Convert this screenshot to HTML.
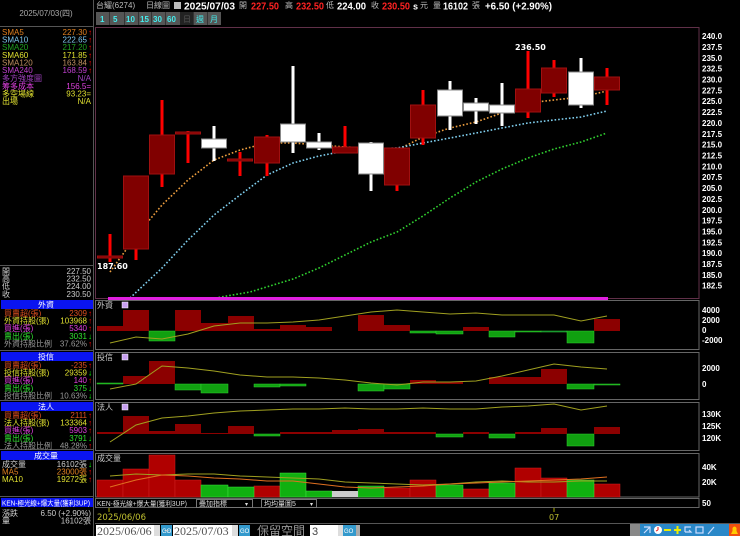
<!DOCTYPE html>
<html><head><meta charset="utf-8">
<style>
html,body{margin:0;padding:0;background:#000;width:740px;height:536px;overflow:hidden}
svg{display:block}
text{font-family:"Liberation Sans","Noto Sans CJK TC",sans-serif}
.s{font-size:8px}
.n{font-family:"DejaVu Sans","Liberation Sans",sans-serif;font-size:8px;font-weight:bold;fill:#fff}
.t{font-family:"Liberation Sans",sans-serif;font-weight:bold;font-size:10px;fill:#fff}
</style></head><body>
<svg width="740" height="536" viewBox="0 0 740 536" xmlns="http://www.w3.org/2000/svg">
<rect width="740" height="536" fill="#000"/>
<line x1="93.5" y1="0" x2="93.5" y2="536" stroke="#555" stroke-width="1"/>
<line x1="0" y1="26.5" x2="93" y2="26.5" stroke="#555"/>
<text x="46" y="16" class="s" fill="#aaa" text-anchor="middle">2025/07/03(四)</text>
<g class="s">
<text x="2" y="35" fill="#e08020">SMA5</text><text x="87" y="35" fill="#e08020" text-anchor="end">227.30</text>
<text x="2" y="42.5" fill="#80c8f0">SMA10</text><text x="87" y="42.5" fill="#80c8f0" text-anchor="end">222.65</text>
<text x="2" y="50" fill="#20a020">SMA20</text><text x="87" y="50" fill="#20a020" text-anchor="end">217.20</text>
<text x="2" y="58" fill="#e0e030">SMA60</text><text x="87" y="58" fill="#e0e030" text-anchor="end">171.85</text>
<text x="2" y="65.5" fill="#c09060">SMA120</text><text x="87" y="65.5" fill="#c09060" text-anchor="end">163.84</text>
<text x="2" y="73" fill="#c040d0">SMA240</text><text x="87" y="73" fill="#c040d0" text-anchor="end">168.59</text>
<text x="2" y="81" fill="#a040c0">多方強度圖</text><text x="91" y="81" fill="#a040c0" text-anchor="end">N/A</text>
<text x="2" y="89" fill="#e040e0">筹多成本</text><text x="91" y="89" fill="#e040e0" text-anchor="end">156.5=</text>
<text x="2" y="96.5" fill="#e0e030">多空場線</text><text x="91" y="96.5" fill="#e0e030" text-anchor="end">93.23=</text>
<text x="2" y="104" fill="#e0e030">出場</text><text x="91" y="104" fill="#e0e030" text-anchor="end">N/A</text>
</g>
<g fill="#f00" class="s">
<text x="88" y="35">↑</text><text x="88" y="42.5">↑</text><text x="88" y="50">↑</text><text x="88" y="58">↑</text><text x="88" y="65.5">↑</text><text x="88" y="73">↑</text>
</g>
<line x1="0" y1="265.5" x2="93" y2="265.5" stroke="#555"/>
<g class="s" fill="#ccc">
<text x="2" y="274">開</text><text x="91" y="274" text-anchor="end">227.50</text>
<text x="2" y="281.5">高</text><text x="91" y="281.5" text-anchor="end">232.50</text>
<text x="2" y="289">低</text><text x="91" y="289" text-anchor="end">224.00</text>
<text x="2" y="297">收</text><text x="91" y="297" text-anchor="end">230.50</text>
</g>
<g>
<rect x="1" y="300" width="92" height="9" fill="#0a14f0"/><text x="46" y="307.5" class="s" fill="#fff" text-anchor="middle">外資</text>
<rect x="1" y="352" width="92" height="9" fill="#0a14f0"/><text x="46" y="359.5" class="s" fill="#fff" text-anchor="middle">投信</text>
<rect x="1" y="402" width="92" height="9" fill="#0a14f0"/><text x="46" y="409.5" class="s" fill="#fff" text-anchor="middle">法人</text>
<rect x="1" y="451" width="92" height="9" fill="#0a14f0"/><text x="46" y="458.5" class="s" fill="#fff" text-anchor="middle">成交量</text>
<rect x="1" y="498" width="92" height="9" fill="#0a14f0"/><text x="2" y="505.5" class="s" fill="#fff" style="font-size:7px" textLength="88" lengthAdjust="spacingAndGlyphs">KEN-極光線+爆大量(獲利3UP)</text>
</g>
<line x1="0" y1="350.5" x2="93" y2="350.5" stroke="#555"/>
<line x1="0" y1="400.5" x2="93" y2="400.5" stroke="#555"/>
<line x1="0" y1="449.5" x2="93" y2="449.5" stroke="#555"/>
<line x1="0" y1="496.5" x2="93" y2="496.5" stroke="#555"/>
<g class="s">
<text x="4" y="316" fill="#e05020">買賣超(張)</text><text x="87" y="316" fill="#e05020" text-anchor="end">2309</text>
<text x="4" y="323.5" fill="#e0e030">外資持股(張)</text><text x="87" y="323.5" fill="#e0e030" text-anchor="end">103968</text>
<text x="4" y="331" fill="#e040e0">買進(張)</text><text x="87" y="331" fill="#e040e0" text-anchor="end">5340</text>
<text x="4" y="339" fill="#30e030">賣出(張)</text><text x="87" y="339" fill="#30e030" text-anchor="end">3031</text>
<text x="4" y="346.5" fill="#999">外資持股比例</text><text x="87" y="346.5" fill="#999" text-anchor="end">37.62%</text>
<text x="4" y="368" fill="#e05020">買賣超(張)</text><text x="87" y="368" fill="#e05020" text-anchor="end">-235</text>
<text x="4" y="375.5" fill="#e0e030">投信持股(張)</text><text x="87" y="375.5" fill="#e0e030" text-anchor="end">29359</text>
<text x="4" y="383" fill="#e040e0">買進(張)</text><text x="87" y="383" fill="#e040e0" text-anchor="end">140</text>
<text x="4" y="391" fill="#30e030">賣出(張)</text><text x="87" y="391" fill="#30e030" text-anchor="end">375</text>
<text x="4" y="398.5" fill="#999">投信持股比例</text><text x="87" y="398.5" fill="#999" text-anchor="end">10.63%</text>
<text x="4" y="418" fill="#e05020">買賣超(張)</text><text x="87" y="418" fill="#e05020" text-anchor="end">2111</text>
<text x="4" y="425.5" fill="#e0e030">法人持股(張)</text><text x="87" y="425.5" fill="#e0e030" text-anchor="end">133364</text>
<text x="4" y="433" fill="#e040e0">買進(張)</text><text x="87" y="433" fill="#e040e0" text-anchor="end">5903</text>
<text x="4" y="441" fill="#30e030">賣出(張)</text><text x="87" y="441" fill="#30e030" text-anchor="end">3791</text>
<text x="4" y="448.5" fill="#999">法人持股比例</text><text x="87" y="448.5" fill="#999" text-anchor="end">48.28%</text>
<text x="2" y="467" fill="#ccc">成交量</text><text x="87" y="467" fill="#ccc" text-anchor="end">16102張</text>
<text x="2" y="474.5" fill="#e08020">MA5</text><text x="87" y="474.5" fill="#e08020" text-anchor="end">23000張</text>
<text x="2" y="482" fill="#e0e030">MA10</text><text x="87" y="482" fill="#e0e030" text-anchor="end">19272張</text>
<text x="2" y="516" fill="#ccc">漲跌</text><text x="91" y="516" fill="#ccc" text-anchor="end">6.50 (+2.90%)</text>
<text x="2" y="523.5" fill="#ccc">量</text><text x="91" y="523.5" fill="#ccc" text-anchor="end">16102張</text>
</g>
<g class="s">
<text x="88" y="316" fill="#f00">↑</text><text x="88" y="323.5" fill="#f00">↑</text><text x="88" y="331" fill="#f00">↑</text><text x="88" y="339" fill="#0f0">↓</text><text x="88" y="346.5" fill="#f00">↑</text>
<text x="88" y="368" fill="#f00">↑</text><text x="88" y="375.5" fill="#0f0">↓</text><text x="88" y="383" fill="#f00">↑</text><text x="88" y="391" fill="#0f0">↓</text><text x="88" y="398.5" fill="#0f0">↓</text>
<text x="88" y="418" fill="#f00">↑</text><text x="88" y="425.5" fill="#f00">↑</text><text x="88" y="433" fill="#f00">↑</text><text x="88" y="441" fill="#0f0">↓</text><text x="88" y="448.5" fill="#f00">↑</text>
<text x="88" y="467" fill="#0f0">↓</text><text x="88" y="474.5" fill="#f00">↑</text><text x="88" y="482" fill="#f00">↑</text>
</g>

<!-- top bar -->
<g class="s">
<text x="96" y="8" fill="#bbb">台耀(6274)</text>
<text x="146" y="8" fill="#bbb">日線圖</text>
<rect x="174" y="2" width="7" height="7" fill="#bbb"/>
<text x="184" y="9.5" class="t" textLength="51" lengthAdjust="spacingAndGlyphs">2025/07/03</text>
<text x="239" y="8" fill="#bbb">開</text><text x="251" y="9.5" class="t" style="fill:#f22" textLength="28" lengthAdjust="spacingAndGlyphs">227.50</text>
<text x="285" y="8" fill="#bbb">高</text><text x="296" y="9.5" class="t" style="fill:#f22" textLength="28" lengthAdjust="spacingAndGlyphs">232.50</text>
<text x="326" y="8" fill="#bbb">低</text><text x="337" y="9.5" class="t" textLength="29" lengthAdjust="spacingAndGlyphs">224.00</text>
<text x="371" y="8" fill="#bbb">收</text><text x="382" y="9.5" class="t" style="fill:#f22" textLength="28" lengthAdjust="spacingAndGlyphs">230.50</text>
<text x="413" y="9.5" class="t" style="font-size:9px">s</text><text x="420" y="8" fill="#bbb">元</text>
<text x="433" y="8" fill="#bbb">量</text><text x="443" y="9.5" class="t" textLength="25" lengthAdjust="spacingAndGlyphs">16102</text>
<text x="472" y="8" fill="#bbb">張</text>
<text x="485" y="9.5" class="t" textLength="67" lengthAdjust="spacingAndGlyphs">+6.50 (+2.90%)</text>
</g>
<g>
<rect x="96" y="12" width="125" height="13" fill="#555"/>
<g fill="#333"><rect x="109" y="12" width="1" height="13"/><rect x="124" y="12" width="1" height="13"/><rect x="138" y="12" width="1" height="13"/><rect x="151" y="12" width="1" height="13"/><rect x="165" y="12" width="1" height="13"/><rect x="193" y="12" width="1" height="13"/><rect x="207" y="12" width="1" height="13"/></g>
<rect x="180" y="12" width="13" height="13" fill="#222"/>
<g class="n" style="fill:#4ee;font-size:8px">
<text x="100" y="22">1</text><text x="113" y="22">5</text><text x="126" y="22">10</text><text x="140" y="22">15</text><text x="153" y="22">30</text><text x="167" y="22">60</text>
</g>
<text x="183" y="22" class="s" fill="#555">日</text><text x="196" y="22" class="s" fill="#4ee">週</text><text x="210" y="22" class="s" fill="#4ee">月</text>
</g>

<rect x="95.5" y="27.5" width="603.5" height="271" fill="none" stroke="#603048"/>
<g class="n">
<text x="702" y="39">240.0</text><text x="702" y="50">237.5</text><text x="702" y="61">235.0</text><text x="702" y="71.5">232.5</text><text x="702" y="82.5">230.0</text><text x="702" y="93.5">227.5</text><text x="702" y="104">225.0</text><text x="702" y="115">222.5</text><text x="702" y="126">220.0</text><text x="702" y="137">217.5</text><text x="702" y="147.5">215.0</text><text x="702" y="158.5">212.5</text><text x="702" y="169.5">210.0</text><text x="702" y="180">207.5</text><text x="702" y="191">205.0</text><text x="702" y="202">202.5</text><text x="702" y="213">200.0</text><text x="702" y="223.5">197.5</text><text x="702" y="234.5">195.0</text><text x="702" y="245.5">192.5</text><text x="702" y="256">190.0</text><text x="702" y="267">187.5</text><text x="702" y="278">185.0</text><text x="702" y="288.5">182.5</text>
</g>

<g fill="none" stroke-width="1.6" stroke-dasharray="1.6 2">
<polyline stroke="#f0a040" points="110,272 136,236 162,205 188,180 214,160 240,150 267,143 293,143 319,145 345,147 371,148 397,150 423,137 450,128 476,122 502,113 528,103 554,100 581,97 607,91"/>
<polyline stroke="#80d0f0" points="130,298 162,268 188,240 214,215 240,195 267,175 293,163 319,156 345,151 371,149 397,148 423,143 450,138 476,133 502,128 528,123 554,120 581,117 607,111"/>
<polyline stroke="#30d030" points="215,298 250,292 293,279 319,268 345,255 371,242 397,232 423,216 450,198 476,182 502,169 528,158 554,149 581,142 607,133"/>
</g>
<rect x="108" y="297" width="500" height="3" fill="#e020e0"/>

<g>
<g fill="#f00">
<rect x="108.5" y="234" width="3" height="28"/>
<rect x="134.5" y="176" width="3" height="84"/>
<rect x="160.5" y="100" width="3" height="87"/>
<rect x="186.5" y="131" width="3" height="32"/>
<rect x="238.5" y="152" width="3" height="24"/>
<rect x="265.5" y="135" width="3" height="41"/>
<rect x="343.5" y="126" width="3" height="27"/>
<rect x="395.5" y="148" width="3" height="43"/>
<rect x="421.5" y="90" width="3" height="55"/>
<rect x="526.5" y="51" width="3" height="67"/>
<rect x="552.5" y="60" width="3" height="37"/>
<rect x="605.5" y="68" width="3" height="37"/>
</g>
<g fill="#800000" stroke="#a01010" stroke-width="1">
<rect x="97.5" y="256" width="25" height="2"/>
<rect x="123.5" y="176" width="25" height="73"/>
<rect x="149.5" y="135" width="25" height="39"/>
<rect x="175.5" y="132" width="25" height="2"/>
<rect x="227.5" y="159" width="25" height="2"/>
<rect x="254.5" y="137" width="25" height="26"/>
<rect x="332.5" y="147" width="25" height="6"/>
<rect x="384.5" y="148" width="25" height="37"/>
<rect x="410.5" y="105" width="25" height="33"/>
<rect x="515.5" y="89" width="25" height="23"/>
<rect x="541.5" y="68" width="25" height="25"/>
<rect x="594.5" y="77" width="25" height="13"/>
</g>
<g fill="#fff">
<rect x="212.5" y="126" width="3" height="35"/>
<rect x="291.5" y="66" width="3" height="87"/>
<rect x="317.5" y="133" width="3" height="17"/>
<rect x="369.5" y="142" width="3" height="49"/>
<rect x="448.5" y="81" width="3" height="49"/>
<rect x="474.5" y="98" width="3" height="26"/>
<rect x="500.5" y="83" width="3" height="43"/>
<rect x="579.5" y="58" width="3" height="50"/>
</g>
<g fill="#fff" stroke="#888" stroke-width="1">
<rect x="201.5" y="139" width="25" height="9"/>
<rect x="280.5" y="124" width="25" height="18"/>
<rect x="306.5" y="142" width="25" height="6"/>
<rect x="358.5" y="143" width="25" height="31"/>
<rect x="437.5" y="90" width="25" height="26"/>
<rect x="463.5" y="103" width="25" height="8"/>
<rect x="489.5" y="105" width="25" height="8"/>
<rect x="568.5" y="72" width="25" height="33"/>
</g>
<text x="97" y="269" class="n" style="font-size:8px">187.60</text>
<text x="515" y="50" class="n" style="font-size:8px">236.50</text>
</g>

<g fill="none" stroke="#666">
<rect x="95.5" y="300.5" width="603.5" height="49"/>
<rect x="95.5" y="352.5" width="603.5" height="47"/>
<rect x="95.5" y="402.5" width="603.5" height="48"/>
<rect x="95.5" y="453.5" width="603.5" height="43.5"/>
<rect x="95.5" y="498.5" width="603.5" height="9"/>
</g>
<g class="s" fill="#ccc">
<text x="97" y="308">外資</text><text x="97" y="360">投信</text><text x="97" y="410">法人</text><text x="97" y="461">成交量</text>
</g>
<g fill="#c8a0f0" stroke="#fff" stroke-width="0.5">
<rect x="122" y="302" width="6" height="6"/><rect x="122" y="354" width="6" height="6"/><rect x="122" y="404" width="6" height="6"/>
</g>
<g class="n">
<text x="702" y="313">4000</text><text x="702" y="323">2000</text><text x="702" y="333">0</text><text x="702" y="343">-2000</text>
<text x="702" y="371">2000</text><text x="702" y="387">0</text>
<text x="702" y="417">130K</text><text x="702" y="429">125K</text><text x="702" y="441">120K</text>
<text x="702" y="470">40K</text><text x="702" y="485">20K</text>
<text x="702" y="506">50</text>
</g>

<g fill="#8c0000">
<rect x="97" y="326" width="26" height="5"/><rect x="123" y="310" width="26" height="21"/><rect x="175" y="310" width="26" height="21"/><rect x="201" y="323" width="27" height="8"/><rect x="228" y="316" width="26" height="15"/><rect x="254" y="329" width="26" height="2"/><rect x="280" y="325" width="26" height="6"/><rect x="306" y="327" width="26" height="4"/><rect x="358" y="315" width="26" height="16"/><rect x="384" y="325" width="26" height="6"/><rect x="463" y="327" width="26" height="4"/><rect x="594" y="319" width="26" height="12"/>
</g>
<g fill="#10a010" stroke="#30d030" stroke-width="0.5">
<rect x="149" y="331" width="26" height="10"/><rect x="410" y="331" width="26" height="2"/><rect x="436" y="331" width="27" height="3"/><rect x="489" y="331" width="26" height="6"/><rect x="515" y="331" width="26" height="1"/><rect x="541" y="331" width="26" height="1" fill="#063"/><rect x="567" y="331" width="27" height="12"/>
</g>
<polyline fill="none" stroke="#a0a020" stroke-width="1" points="110,343 136,337 162,339 188,334 214,326 240,323 267,323 293,322 319,320 345,316 371,312 397,310 423,312 450,314 476,313 502,315 528,315 554,315 581,321 607,316"/>

<g fill="#8c0000">
<rect x="123" y="376" width="26" height="8"/><rect x="149" y="361" width="26" height="23"/><rect x="410" y="380" width="26" height="4"/><rect x="436" y="382" width="27" height="2"/><rect x="489" y="377" width="26" height="7"/><rect x="515" y="377" width="26" height="7"/><rect x="541" y="369" width="26" height="15"/>
</g>
<g fill="#10a010" stroke="#30d030" stroke-width="0.5">
<rect x="97" y="383" width="26" height="1"/><rect x="175" y="384" width="26" height="6"/><rect x="201" y="384" width="27" height="9"/><rect x="254" y="384" width="26" height="3"/><rect x="280" y="384" width="26" height="2"/><rect x="358" y="384" width="26" height="7"/><rect x="384" y="384" width="26" height="5"/><rect x="567" y="384" width="27" height="5"/><rect x="594" y="384" width="26" height="1"/>
</g>
<polyline fill="none" stroke="#a0a020" stroke-width="1" points="110,389 136,384 162,366 188,368 214,371 240,375 267,377 293,377 319,378 345,380 371,383 397,385 423,382 450,382 476,381 502,376 528,370 554,364 581,367 607,369"/>

<g fill="#8c0000">
<rect x="97" y="432" width="26" height="2"/><rect x="123" y="416" width="26" height="18"/><rect x="149" y="431" width="26" height="3"/><rect x="175" y="424" width="26" height="10"/><rect x="201" y="433" width="27" height="1"/><rect x="228" y="426" width="26" height="8"/><rect x="280" y="432" width="26" height="2"/><rect x="306" y="432" width="26" height="2"/><rect x="332" y="430" width="26" height="4"/><rect x="358" y="429" width="26" height="5"/><rect x="384" y="432" width="26" height="2"/><rect x="410" y="432" width="26" height="2"/><rect x="463" y="432" width="26" height="2"/><rect x="515" y="432" width="26" height="2"/><rect x="541" y="428" width="26" height="6"/><rect x="594" y="427" width="26" height="7"/>
</g>
<g fill="#10a010" stroke="#30d030" stroke-width="0.5">
<rect x="254" y="434" width="26" height="2"/><rect x="436" y="434" width="27" height="3"/><rect x="489" y="434" width="26" height="4"/><rect x="567" y="434" width="27" height="12"/>
</g>
<polyline fill="none" stroke="#a0a020" stroke-width="1" points="110,442 136,425 162,418 188,416 214,413 240,411 267,410 293,409 319,409 345,408 371,409 397,409 423,408 450,409 476,409 502,407 528,406 554,404 581,410 607,406"/>

<g fill="#b00000" stroke="#d02020" stroke-width="0.5">
<rect x="97" y="480" width="26" height="17"/><rect x="123" y="469" width="26" height="28"/><rect x="149" y="455" width="26" height="42"/><rect x="175" y="480" width="26" height="17"/><rect x="254" y="486" width="26" height="11"/><rect x="384" y="488" width="26" height="9"/><rect x="410" y="480" width="26" height="17"/><rect x="463" y="489" width="26" height="8"/><rect x="515" y="468" width="26" height="29"/><rect x="541" y="478" width="26" height="19"/><rect x="594" y="484" width="26" height="13"/>
</g>
<g fill="#10b010" stroke="#40e040" stroke-width="0.5">
<rect x="201" y="485" width="27" height="12"/><rect x="228" y="487" width="26" height="10"/><rect x="280" y="473" width="26" height="24"/><rect x="306" y="491" width="26" height="6"/><rect x="358" y="486" width="26" height="11"/><rect x="436" y="485" width="27" height="12"/><rect x="489" y="483" width="26" height="14"/><rect x="567" y="480" width="27" height="17"/>
</g>
<rect x="332" y="491" width="26" height="6" fill="#ccc"/>
<polyline fill="none" stroke="#a0a020" stroke-width="1" points="110,476 136,474 162,475 188,474 214,474 240,476 267,477 293,478 319,479 345,482 371,483 397,484 423,485 450,484 476,482 502,481 528,482 554,482 581,481 607,481"/>
<polyline fill="none" stroke="#e07020" stroke-width="1" points="110,487 136,480 162,475 188,476 214,478 240,479 267,481 293,481 319,484 345,487 371,488 397,487 423,486 450,484 476,483 502,482 528,481 554,480 581,479 607,477"/>

<text x="97" y="506" class="s" fill="#ddd" style="font-size:7px" textLength="90" lengthAdjust="spacingAndGlyphs">KEN-極光線+爆大量(獲利3UP)</text>
<rect x="196.5" y="499.5" width="56" height="8" fill="none" stroke="#777"/><text x="199" y="506" class="s" fill="#ddd" style="font-size:7px">疊加指標</text><text x="245" y="506" class="s" fill="#ddd" style="font-size:6px">▾</text>
<rect x="261.5" y="499.5" width="55" height="8" fill="none" stroke="#777"/><text x="264" y="506" class="s" fill="#ddd" style="font-size:7px">均均量圖5</text><text x="310" y="506" class="s" fill="#ddd" style="font-size:6px">▾</text>

<line x1="109" y1="508" x2="109" y2="512" stroke="#aa0"/>
<text x="97" y="520" class="s" fill="#c0c030" style="font-size:8.5px;font-family:'DejaVu Sans',sans-serif">2025/06/06</text>
<line x1="554" y1="508" x2="554" y2="512" stroke="#aa0"/>
<text x="549" y="520" class="s" fill="#c0c030" style="font-size:8px;font-family:'DejaVu Sans',sans-serif">07</text>
<line x1="95" y1="523.5" x2="740" y2="523.5" stroke="#555"/>

<rect x="96" y="525" width="64" height="11" fill="#fff"/>
<text x="97" y="535" fill="#555" style="font-size:12px;font-family:'Liberation Serif',serif">2025/06/06</text>
<rect x="154" y="525" width="6" height="11" fill="#ddd"/>
<rect x="161" y="525" width="11" height="11" fill="#39c"/><text x="162" y="533" fill="#fff" style="font-size:6px">GO</text>
<text x="164" y="534" fill="#ccc" style="font-size:10px">~</text>
<rect x="173" y="525" width="65" height="11" fill="#fff"/>
<text x="174" y="535" fill="#555" style="font-size:12px;font-family:'Liberation Serif',serif">2025/07/03</text>
<rect x="232" y="525" width="6" height="11" fill="#ddd"/>
<rect x="239" y="525" width="11" height="11" fill="#39c"/><text x="240" y="533" fill="#fff" style="font-size:6px">GO</text>
<text x="257" y="535" fill="#999" style="font-size:12px;font-family:'Noto Sans CJK TC',sans-serif">保留空間</text>
<rect x="310" y="525" width="28" height="11" fill="#fff"/><text x="312" y="535" fill="#444" style="font-size:11px">3</text>
<rect x="338" y="525" width="5" height="11" fill="#ddd"/>
<rect x="343" y="525" width="13" height="11" fill="#39c"/><text x="344" y="533" fill="#fff" style="font-size:6px">GO</text>
<rect x="356" y="525" width="4" height="11" fill="#aaa"/>
<rect x="630" y="524" width="10" height="12" fill="#888"/>
<rect x="640" y="524" width="90" height="12" fill="#2a88c8"/>
<g stroke="#cdf" stroke-width="1.2" fill="none">
<path d="M644 533 L650 527 M644 527 L650 527 L650 533"/>
<circle cx="658" cy="530" r="4" fill="#fff" stroke="none"/>
<path d="M658 530 L658 527 M658 530 L656 531" stroke="#e33"/>
<path d="M664 530 L671 530" stroke="#ee0" stroke-width="2"/>
<path d="M674 530 L681 530 M677.5 526 L677.5 534" stroke="#ee0" stroke-width="2"/>
<path d="M685 532 L685 527 L691 527 M685 532 L691 532 L689 530"/>
<rect x="696" y="527" width="7" height="6"/>
<path d="M708 534 L714 527"/>
</g>
<rect x="729" y="524" width="11" height="12" fill="#f05010"/>
<path d="M731 534 L738 534 L736.5 531 L736.5 528 Q734.5 525 732.5 528 L732.5 531 Z" fill="#fc0"/>
</svg>
</body></html>
